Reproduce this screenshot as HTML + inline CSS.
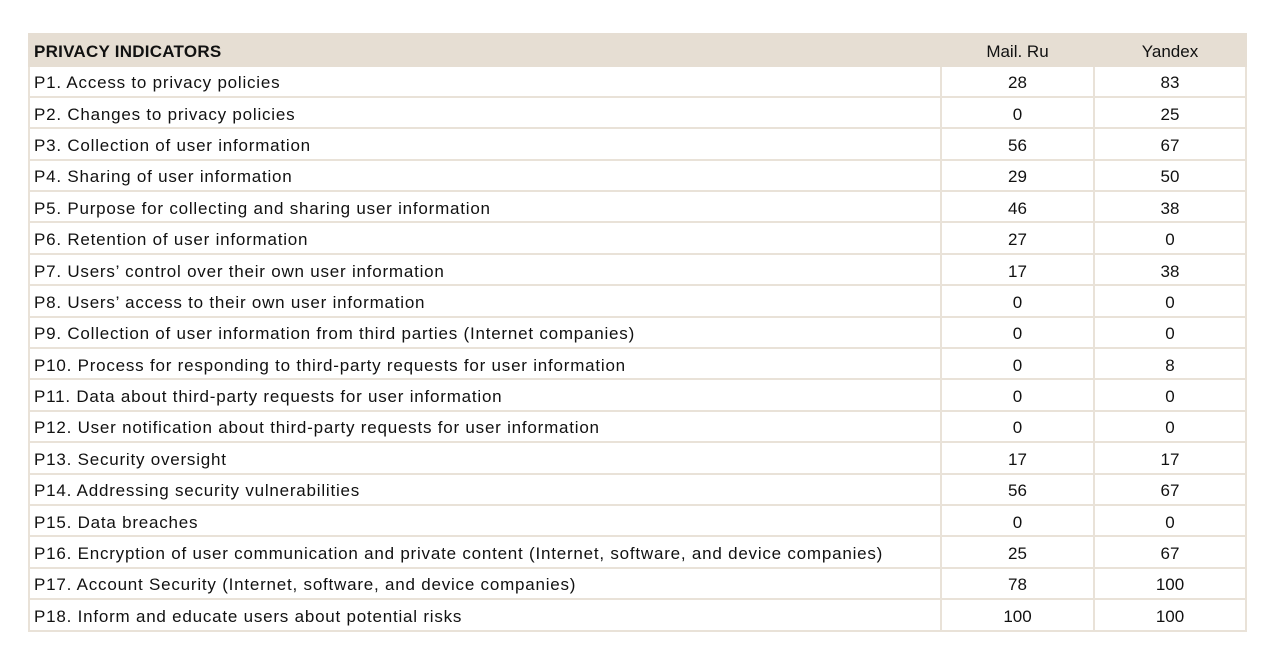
<!DOCTYPE html>
<html><head><meta charset="utf-8"><style>
body{margin:0;background:#fff;width:1268px;height:658px;overflow:hidden;font-family:"Liberation Sans",sans-serif;color:#111}
table{position:absolute;left:28px;top:33px;border-collapse:collapse;width:1217px;table-layout:fixed}
td{border:2px solid #e9e2d8;height:29.4px;padding:4px 4px 0 4px;box-sizing:border-box;font-size:17px;letter-spacing:0.78px;white-space:nowrap;overflow:hidden}
tr{height:31.4px}
td.n{text-align:center;letter-spacing:0}
tr.h{height:31.5px}
tr.h td{background:#e6ded3;border-color:#e6ded3;height:31.5px;letter-spacing:0}
tr.h td.l{font-weight:bold;letter-spacing:0.25px}
</style></head><body>
<table>
<colgroup><col style="width:912px"><col style="width:153px"><col style="width:152px"></colgroup>
<tr class="h"><td class="l">PRIVACY INDICATORS</td><td class="n">Mail. Ru</td><td class="n">Yandex</td></tr>
<tr><td>P1. Access to privacy policies</td><td class="n">28</td><td class="n">83</td></tr>
<tr><td>P2. Changes to privacy policies</td><td class="n">0</td><td class="n">25</td></tr>
<tr><td>P3. Collection of user information</td><td class="n">56</td><td class="n">67</td></tr>
<tr><td>P4. Sharing of user information</td><td class="n">29</td><td class="n">50</td></tr>
<tr><td>P5. Purpose for collecting and sharing user information</td><td class="n">46</td><td class="n">38</td></tr>
<tr><td>P6. Retention of user information</td><td class="n">27</td><td class="n">0</td></tr>
<tr><td>P7. Users’ control over their own user information</td><td class="n">17</td><td class="n">38</td></tr>
<tr><td>P8. Users’ access to their own user information</td><td class="n">0</td><td class="n">0</td></tr>
<tr><td>P9. Collection of user information from third parties (Internet companies)</td><td class="n">0</td><td class="n">0</td></tr>
<tr><td>P10. Process for responding to third-party requests for user information</td><td class="n">0</td><td class="n">8</td></tr>
<tr><td>P11. Data about third-party requests for user information</td><td class="n">0</td><td class="n">0</td></tr>
<tr><td>P12. User notification about third-party requests for user information</td><td class="n">0</td><td class="n">0</td></tr>
<tr><td>P13. Security oversight</td><td class="n">17</td><td class="n">17</td></tr>
<tr><td>P14. Addressing security vulnerabilities</td><td class="n">56</td><td class="n">67</td></tr>
<tr><td>P15. Data breaches</td><td class="n">0</td><td class="n">0</td></tr>
<tr><td>P16. Encryption of user communication and private content (Internet, software, and device companies)</td><td class="n">25</td><td class="n">67</td></tr>
<tr><td>P17. Account Security (Internet, software, and device companies)</td><td class="n">78</td><td class="n">100</td></tr>
<tr><td>P18. Inform and educate users about potential risks</td><td class="n">100</td><td class="n">100</td></tr>
</table>
</body></html>
